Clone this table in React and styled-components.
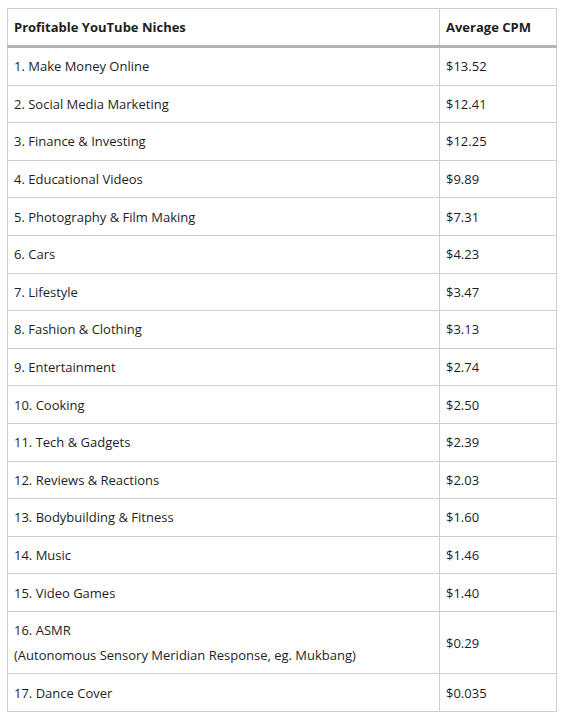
import { createGlobalStyle, styled } from "styled-components";

const GlobalStyle = createGlobalStyle`
  body {
    margin: 0;
    background: #fff;
    font-family: "Open Sans", "Liberation Sans", sans-serif;
    color: #1e1e1e;
  }
`;

const Page = styled.div`
  padding: 8px 0 0 7px;
`;

const Table = styled.table`
  width: 550px;
  border-collapse: collapse;
  table-layout: fixed;
  font-size: 13px;
`;

const HeadCell = styled.th`
  text-align: left;
  font-weight: 700;
  height: 36px;
  padding: 0 6px;
  border: 1px solid #d0d0d0;
  border-bottom: 3px solid #b4b4b4;
  width: ${(p) => p.w || "auto"};
`;

const Cell = styled.td`
  height: ${(p) => (p.tall ? 61.5 : 36.6)}px;
  padding: 0 6px;
  border: 1px solid #d0d0d0;
  vertical-align: middle;
`;

const Line = styled.div`
  line-height: 25px;
`;

const niches = [
  ["1. Make Money Online", "$13.52"],
  ["2. Social Media Marketing", "$12.41"],
  ["3. Finance & Investing", "$12.25"],
  ["4. Educational Videos", "$9.89"],
  ["5. Photography & Film Making", "$7.31"],
  ["6. Cars", "$4.23"],
  ["7. Lifestyle", "$3.47"],
  ["8. Fashion & Clothing", "$3.13"],
  ["9. Entertainment", "$2.74"],
  ["10. Cooking", "$2.50"],
  ["11. Tech & Gadgets", "$2.39"],
  ["12. Reviews & Reactions", "$2.03"],
  ["13. Bodybuilding & Fitness", "$1.60"],
  ["14. Music", "$1.46"],
  ["15. Video Games", "$1.40"],
];

function App() {
  return (
    <Page>
      <GlobalStyle />
      <Table>
        <thead>
          <tr>
            <HeadCell w="419px">Profitable YouTube Niches</HeadCell>
            <HeadCell>Average CPM</HeadCell>
          </tr>
        </thead>
        <tbody>
          {niches.map(([name, cpm]) => (
            <tr key={name}>
              <Cell>{name}</Cell>
              <Cell>{cpm}</Cell>
            </tr>
          ))}
          <tr>
            <Cell tall>
              <Line>16. ASMR</Line>
              <Line>(Autonomous Sensory Meridian Response, eg. Mukbang)</Line>
            </Cell>
            <Cell tall>$0.29</Cell>
          </tr>
          <tr>
            <Cell>17. Dance Cover</Cell>
            <Cell>$0.035</Cell>
          </tr>
        </tbody>
      </Table>
    </Page>
  );
}

export default App;
